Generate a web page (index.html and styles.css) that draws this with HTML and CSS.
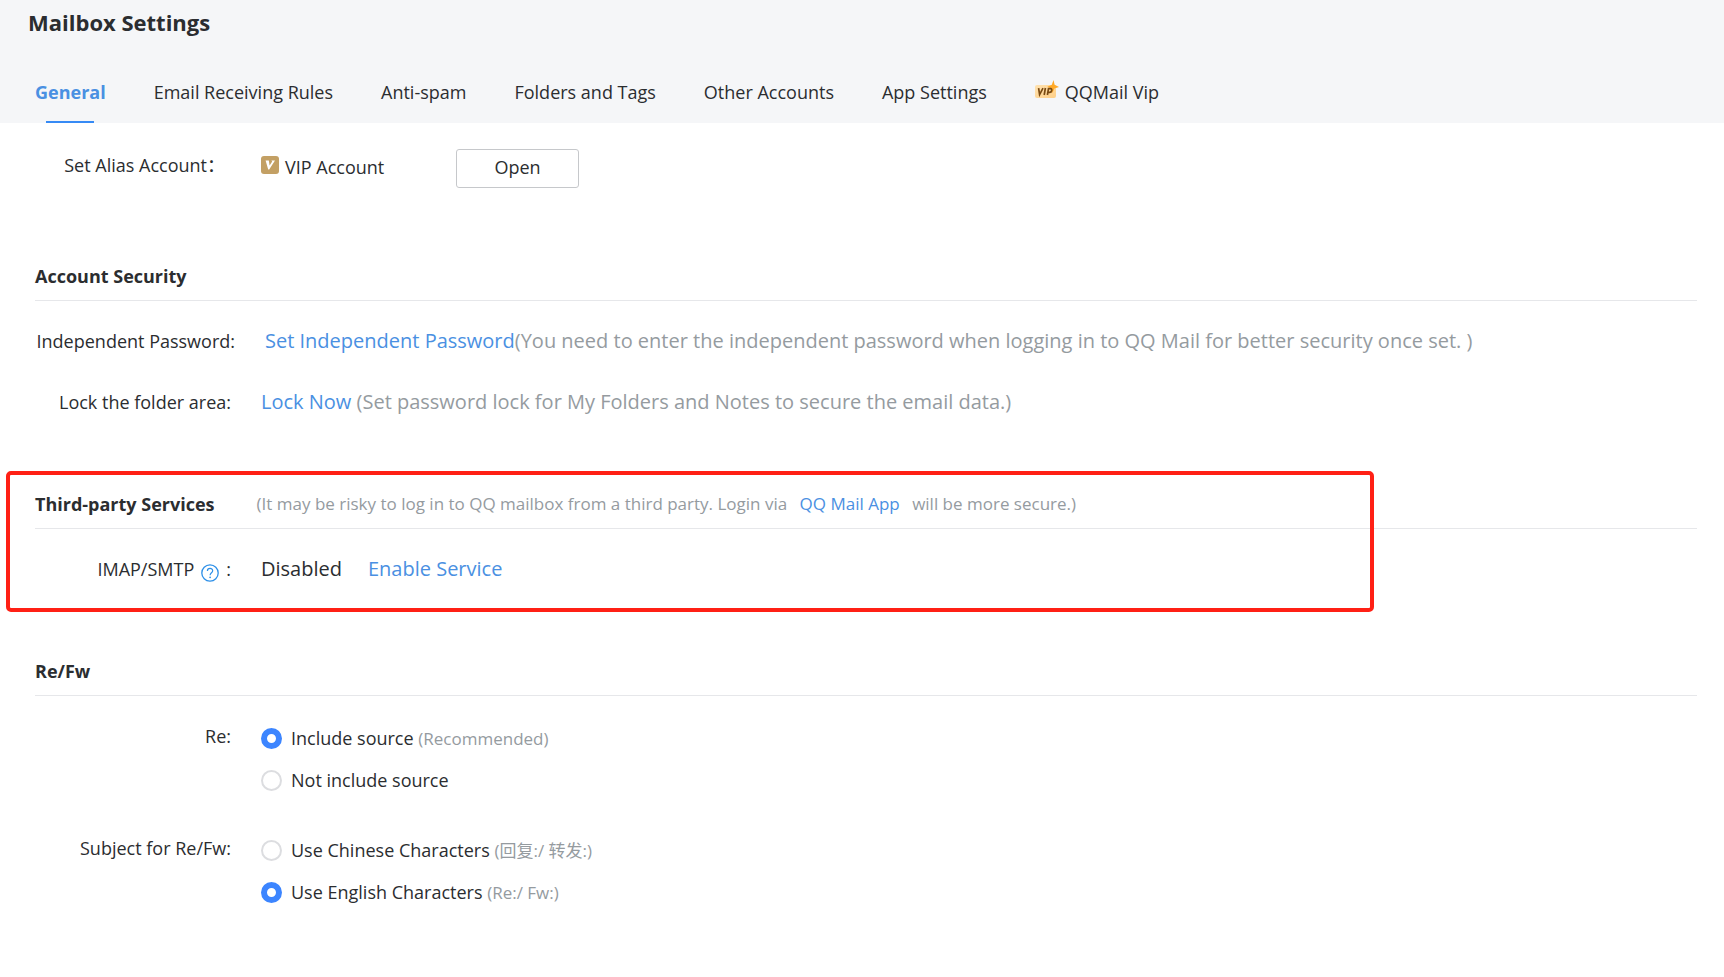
FILE: index.html
```html
<!DOCTYPE html>
<html lang="en">
<head>
<meta charset="utf-8">
<title>Mailbox Settings</title>
<link rel="stylesheet" href="styles.css">
</head>
<body>
<header class="header">
  <h1 class="title">Mailbox Settings</h1>
  <nav class="tabs">
    <a class="tab tab-active" href="#">General</a>
    <a class="tab" href="#">Email Receiving Rules</a>
    <a class="tab" href="#">Anti-spam</a>
    <a class="tab" href="#">Folders and Tags</a>
    <a class="tab" href="#">Other Accounts</a>
    <a class="tab" href="#">App Settings</a>
    <a class="tab tab-vip" href="#">
      <svg class="vip-icon" viewBox="0 0 24 21" aria-hidden="true">
        <defs><linearGradient id="gold" x1="0" y1="0" x2="1" y2="1"><stop offset="0" stop-color="#ffe2b0"/><stop offset="1" stop-color="#ffcf87"/></linearGradient></defs>
        <rect x="0" y="5" width="21" height="13" rx="2" fill="url(#gold)"/>
        <path d="M18.5 0 19.6 4.8 24 7 19.4 8.4 17.4 13 16.6 8.6 12.4 6.8 16.8 4.8Z" fill="#ffa928"/>
        <path d="M3.6 8.2 4.6 14.6 8 8.2M10.4 8 9.2 15M12.4 15 13.5 8.7H15.6C17.4 8.7 17 12.3 14.8 12.3H13" fill="none" stroke="#7a4a12" stroke-width="1.7"/>
      </svg>
      <span>QQMail Vip</span>
    </a>
  </nav>
</header>
<main class="content">
  <section class="alias">
    <div class="row">
      <span class="label label-alias">Set Alias Account：</span>
      <div class="value alias-value">
        <span class="vip-account">
          <svg class="v-icon" viewBox="0 0 18 18" aria-hidden="true"><rect width="18" height="18" rx="3" fill="#c3a064"/><path d="M4.6 4.4H7.8L8.6 9.6 11.2 5.6 10.4 4.4H14L8.2 13.6H7.2Z" fill="#fff"/></svg>
          VIP Account
        </span>
        <button class="open" type="button">Open</button>
      </div>
    </div>
  </section>

  <section class="section security">
    <div class="section-head"><h2>Account Security</h2></div>
    <div class="row">
      <span class="label label-wide">Independent Password:</span>
      <p class="value big"><a href="#">Set Independent Password</a>(You need to enter the independent password when logging in to QQ Mail for better security once set. )</p>
    </div>
    <div class="row">
      <span class="label">Lock the folder area:</span>
      <p class="value big"><a href="#">Lock Now</a> (Set password lock for My Folders and Notes to secure the email data.)</p>
    </div>
  </section>

  <section class="section services">
    <div class="section-head">
      <h2>Third-party Services</h2>
      <p class="hint">(It may be risky to log in to QQ mailbox from a third party. Login via <a class="app-link" href="#">QQ Mail App</a> will be more secure.)</p>
    </div>
    <div class="row">
      <span class="label label-help">IMAP/SMTP
        <svg class="help" viewBox="0 0 18 18" role="img" aria-label="Help"><circle cx="9" cy="9" r="8.2" fill="none" stroke="#2e90e8" stroke-width="1.3"/><path d="M6.4 7C6.4 3.6 11.7 3.7 11.7 6.8 11.7 8.8 9.1 8.9 9.1 11.2" fill="none" stroke="#2e90e8" stroke-width="1.2"/><circle cx="9.1" cy="13.3" r=".9" fill="#2e90e8"/></svg>
        :</span>
      <p class="value big service-value"><span class="status">Disabled</span><a href="#">Enable Service</a></p>
    </div>
    <div class="highlight"></div>
  </section>

  <section class="section refw">
    <div class="section-head"><h2>Re/Fw</h2></div>
    <div class="row row-radio" role="radiogroup" aria-labelledby="re-label">
      <span class="label" id="re-label">Re:</span>
      <div class="value options">
        <label class="option"><input type="radio" name="re" checked><span>Include source <small>(Recommended)</small></span></label>
        <label class="option"><input type="radio" name="re"><span>Not include source</span></label>
      </div>
    </div>
    <div class="row row-radio" role="radiogroup" aria-labelledby="subject-label">
      <span class="label" id="subject-label">Subject for Re/Fw:</span>
      <div class="value options">
        <label class="option"><input type="radio" name="subject"><span>Use Chinese Characters <small>(回复:/ 转发:)</small></span></label>
        <label class="option"><input type="radio" name="subject" checked><span>Use English Characters <small>(Re:/ Fw:)</small></span></label>
      </div>
    </div>
  </section>
</main>
</body>
</html>
```
FILE: styles.css
```css
* {
  box-sizing: border-box;
}

body {
  margin: 0;
  background: #fff;
  color: #2b2d30;
  font: 18px/24px "Open Sans", "Noto Sans CJK SC", sans-serif;
}

h1, h2, p {
  margin: 0;
}

a {
  color: #4a90e2;
  text-decoration: none;
}

.header {
  background: #f5f6f8;
}

.title {
  padding: 8px 28px 0;
  font-size: 22px;
  line-height: 28px;
}

.tabs {
  display: flex;
  gap: 48px;
  padding: 26px 35px 0;
}

.tab {
  position: relative;
  display: flex;
  align-items: center;
  height: 61px;
  padding-bottom: 2px;
  color: #2b2d30;
  white-space: nowrap;
}

.tab-active {
  color: #4a90e2;
  font-weight: 700;
}

.tab-active::after {
  content: "";
  position: absolute;
  bottom: 0;
  left: 50%;
  width: 48px;
  height: 2px;
  margin-left: -24px;
  background: #368af5;
}

.tab-vip {
  gap: 6px;
}

.vip-icon {
  width: 24px;
  height: 21px;
  margin-bottom: 2px;
}

.content {
  padding: 26px 27px 40px 35px;
}

.row {
  display: flex;
  align-items: center;
}

.label {
  flex: none;
  width: 196px;
  margin-right: 30px;
  text-align: right;
  white-space: nowrap;
}

.value {
  flex: 1;
}

.alias {
  padding-bottom: 63px;
}

.label-alias {
  padding-right: 6px;
  padding-bottom: 8px;
}

.alias-value {
  display: flex;
  align-items: center;
}

.vip-account {
  display: flex;
  align-items: center;
  gap: 6px;
  width: 195px;
  padding-bottom: 4px;
}

.v-icon {
  width: 18px;
  height: 18px;
  margin-bottom: 4px;
}

.open {
  width: 123px;
  height: 39px;
  padding: 0 0 4px;
  border: 1px solid #c6c8cb;
  border-radius: 3px;
  background: #fff;
  color: inherit;
  font: inherit;
}

.section-head {
  display: flex;
  align-items: center;
  gap: 36px;
  height: 50px;
  border-bottom: 1px solid #e6e7ea;
}

.section-head h2 {
  font-size: 18px;
  line-height: 24px;
}

.big {
  color: #959b9f;
  font-size: 20px;
}

.label-wide {
  width: 200px;
}

.security .row {
  margin-top: 37px;
}

.security .row:nth-child(2) {
  margin-top: 28px;
}

.security {
  padding-bottom: 65px;
}

.services {
  position: relative;
  padding-bottom: 64px;
}

.services .row {
  margin-top: 27px;
}

.services .section-head {
  gap: 42px;
}

.hint {
  color: #959b9f;
  font-size: 17px;
}

.app-link {
  margin: 0 8px;
}

.label-help {
  display: flex;
  align-items: center;
  justify-content: flex-end;
  gap: 7px;
}

.help {
  width: 18px;
  height: 18px;
  margin-top: 8px;
}

.service-value {
  display: flex;
  gap: 26px;
}

.status {
  color: #2b2d30;
}

.highlight {
  position: absolute;
  top: -8px;
  left: -29px;
  width: 1368px;
  max-width: calc(100% + 29px);
  height: 141px;
  border: 4px solid #ff2015;
  border-radius: 5px;
  pointer-events: none;
}

.row-radio {
  align-items: flex-start;
  margin-top: 28px;
}

.row-radio + .row-radio {
  margin-top: 44px;
}

.options {
  display: grid;
  gap: 17px;
  padding-top: 2px;
}

.option {
  display: flex;
  align-items: center;
  gap: 9px;
}

.option input {
  appearance: none;
  width: 21px;
  height: 21px;
  margin: 0;
  border: 2px solid #dcdde0;
  border-radius: 50%;
  background: #fff;
}

.option input:checked {
  border: 6px solid #3c85ff;
}

.option small {
  color: #959b9f;
  font-size: 17px;
}
```
